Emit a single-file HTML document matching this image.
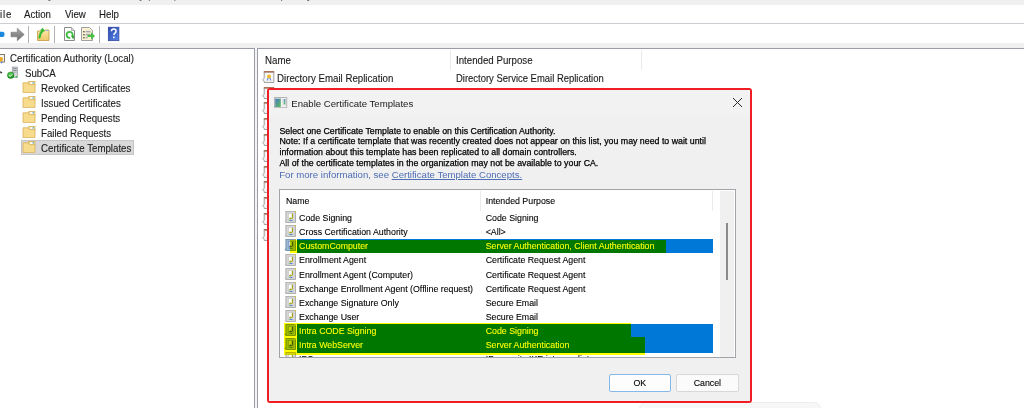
<!DOCTYPE html>
<html><head><meta charset="utf-8"><style>
html,body{margin:0;padding:0;width:1024px;height:408px;overflow:hidden;background:#fff;}
.t{position:absolute;white-space:nowrap;line-height:1;font-family:"Liberation Sans",sans-serif;}
.r{position:absolute;}
</style></head><body>
<div class="r" style="left:0px;top:0px;width:1024.00px;height:5.00px;background:#f0f0f0;"></div>
<div class="t" style="left:9.40px;top:-10.11px;font-size:10.87px;color:#6a6a6a;transform:scaleX(0.915);transform-origin:0 0;-webkit-text-stroke:0.12px #6a6a6a;white-space:pre;">certsrv - [Certification Authority (Local)\SubCA\Certificate Templates]</div>
<div class="r" style="left:0px;top:5px;width:1024.00px;height:18.00px;background:#fff;"></div>
<div class="t" style="left:0.30px;top:9.33px;font-size:10.60px;color:#1b1b1b;transform:scaleX(0.915);transform-origin:0 0;-webkit-text-stroke:0.12px #1b1b1b;letter-spacing:0.9px;">ile</div>
<div class="t" style="left:24.20px;top:9.33px;font-size:10.60px;color:#1b1b1b;transform:scaleX(0.915);transform-origin:0 0;-webkit-text-stroke:0.12px #1b1b1b;">Action</div>
<div class="t" style="left:65.40px;top:9.33px;font-size:10.60px;color:#1b1b1b;transform:scaleX(0.915);transform-origin:0 0;-webkit-text-stroke:0.12px #1b1b1b;">View</div>
<div class="t" style="left:98.70px;top:9.33px;font-size:10.60px;color:#1b1b1b;transform:scaleX(0.915);transform-origin:0 0;-webkit-text-stroke:0.12px #1b1b1b;">Help</div>
<div class="r" style="left:0px;top:23px;width:1024.00px;height:1.00px;background:#cdcdd4;"></div>
<div class="r" style="left:0px;top:24px;width:1024.00px;height:19.00px;background:#fff;"></div>
<div class="r" style="left:0px;top:43px;width:1024.00px;height:5.00px;background:#f0f0f0;"></div>
<div class="r" style="left:28px;top:26px;width:1.00px;height:17.00px;background:#b4b4b4;"></div>
<div class="r" style="left:54px;top:26px;width:1.00px;height:17.00px;background:#b4b4b4;"></div>
<div class="r" style="left:99px;top:26px;width:1.00px;height:17.00px;background:#b4b4b4;"></div>
<svg class="r" style="left:0;top:24px" width="130" height="19" viewBox="0 0 130 19">
<defs>
<linearGradient id="tga" x1="0" y1="0" x2="0" y2="1"><stop offset="0" stop-color="#a8a8a8"/><stop offset="1" stop-color="#6e6e6e"/></linearGradient>
<linearGradient id="tgf" x1="0" y1="0" x2="0" y2="1"><stop offset="0" stop-color="#fbe6a8"/><stop offset="1" stop-color="#efc86a"/></linearGradient>
<linearGradient id="tgh" x1="0" y1="0" x2="1" y2="1"><stop offset="0" stop-color="#2848b0"/><stop offset="1" stop-color="#5a86e8"/></linearGradient>
</defs>
<rect x="-3" y="7.8" width="7.5" height="5.2" rx="2" fill="#1a8ae0"/>
<path d="M11 8.2 h6.3 v-4 l6.9 6.3 -6.9 6.3 v-4 h-6.3z" fill="url(#tga)" stroke="#6a6a6a" stroke-width="0.5" stroke-linejoin="round"/>
<path d="M37.5 7 h6 l1 -1 h4.5 v10.5 h-11.5z" fill="url(#tgf)" stroke="#c9a24e" stroke-width="0.9"/>
<path d="M46 6.5 h2.5" stroke="#8ab8e8" stroke-width="1"/>
<path d="M39.5 13.5 q0.5 -4.5 3.2 -6.8" stroke="#34b834" stroke-width="2.2" fill="none" stroke-linecap="round"/>
<path d="M40 6.5 l2.8 -2.8 2.2 3.8z" fill="#34b834"/>
<path d="M64.5 3.5 h7 l3 3 v10 h-10z" fill="#fdfdfd" stroke="#8a8a8a"/>
<path d="M71.5 3.5 v3 h3" fill="#ddd" stroke="#999" stroke-width="0.7"/>
<circle cx="69.7" cy="10.9" r="3" fill="none" stroke="#3cba3c" stroke-width="1.7" stroke-dasharray="16 2.85" transform="rotate(80 69.7 10.9)"/>
<path d="M70.8 11.8 h3.6 l-1 3.6z" fill="#2ea82e"/>
<path d="M81.5 3.5 h8 l3 3 v10 h-11z" fill="#fbf3d2" stroke="#a0a0a0"/>
<rect x="83.2" y="7" width="1.4" height="1.4" fill="#505050"/><rect x="85.6" y="6.8" width="5" height="1.6" fill="#a8a8b0"/>
<rect x="83.2" y="10" width="1.4" height="1.4" fill="#505050"/><rect x="85.6" y="9.8" width="5" height="1.6" fill="#a8a8b0"/>
<rect x="83.2" y="13" width="1.4" height="1.4" fill="#505050"/><rect x="85.6" y="12.8" width="2" height="1.6" fill="#a8a8b0"/>
<path d="M87.5 11 h3.5 v-2.8 l4 3.8 -4 3.8 v-2.8 h-3.5z" fill="#48c048"/>
<rect x="108.3" y="3.2" width="10.6" height="13.5" fill="url(#tgh)" stroke="#2a3e98" stroke-width="0.7"/>
<path d="M111.3 7.3 q0.2 -2.4 2.4 -2.4 q2.4 0 2.4 2.2 q0 1.4 -1.4 2.2 q-0.9 0.5 -0.9 1.8" stroke="#fff" stroke-width="1.5" fill="none"/>
<rect x="113" y="12.5" width="1.6" height="1.7" fill="#fff"/>
</svg>
<div class="r" style="left:0px;top:48px;width:255.00px;height:360.00px;background:#fff;border-top:1px solid #9a9ca8;border-right:1px solid #9a9ca8;box-sizing:border-box;"></div>
<div class="r" style="left:255px;top:49px;width:2.00px;height:359.00px;background:#f4f4f4;"></div>
<svg class="r" style="left:0;top:50px" width="22" height="30" viewBox="0 0 22 30">
<defs><radialGradient id="gck" cx="0.4" cy="0.3" r="0.7"><stop offset="0" stop-color="#5fd05f"/><stop offset="1" stop-color="#138a13"/></radialGradient></defs>
<rect x="-2" y="4.5" width="6.5" height="7.5" fill="#f6f6fa" stroke="#7a6a50" stroke-width="0.9"/>
<circle cx="0.8" cy="9.3" r="2.2" fill="#eba820"/>
<circle cx="1.7" cy="12.6" r="0.8" fill="#3a7ae8"/>
<path d="M-0.5 21 l3 1.2 -1.6 1.6z" fill="#2a2a2a"/>
<rect x="12.2" y="17" width="5.3" height="10.6" fill="#d4d8dc" stroke="#8a9098" stroke-width="0.6"/>
<rect x="13" y="18" width="3.8" height="1.2" fill="#8a9098"/><rect x="13" y="20" width="3.8" height="1.2" fill="#8a9098"/><rect x="13" y="22" width="3.8" height="0.8" fill="#b0b4b8"/>
<rect x="15.6" y="26" width="1.6" height="1.4" fill="#3cc03c"/>
<circle cx="10.7" cy="25.2" r="3.3" fill="url(#gck)" stroke="#0e700e" stroke-width="0.4"/>
<path d="M9 25.2 l1.2 1.3 2.4 -2.6" stroke="#fff" stroke-width="1" fill="none"/>
</svg>
<div class="r" style="left:21px;top:140px;width:113.00px;height:15.00px;background:#d9d9d9;border:1px solid #c6c6c6;box-sizing:border-box;"></div>
<div class="t" style="left:9.60px;top:53.03px;font-size:10.60px;color:#1b1b1b;transform:scaleX(0.915);transform-origin:0 0;-webkit-text-stroke:0.12px #1b1b1b;">Certification Authority (Local)</div>
<div class="t" style="left:25.10px;top:68.03px;font-size:10.60px;color:#1b1b1b;transform:scaleX(0.915);transform-origin:0 0;-webkit-text-stroke:0.12px #1b1b1b;">SubCA</div>
<div class="t" style="left:41.00px;top:83.03px;font-size:10.60px;color:#1b1b1b;transform:scaleX(0.915);transform-origin:0 0;-webkit-text-stroke:0.12px #1b1b1b;">Revoked Certificates</div>
<div class="t" style="left:41.00px;top:98.03px;font-size:10.60px;color:#1b1b1b;transform:scaleX(0.915);transform-origin:0 0;-webkit-text-stroke:0.12px #1b1b1b;">Issued Certificates</div>
<div class="t" style="left:41.00px;top:113.03px;font-size:10.60px;color:#1b1b1b;transform:scaleX(0.915);transform-origin:0 0;-webkit-text-stroke:0.12px #1b1b1b;">Pending Requests</div>
<div class="t" style="left:41.00px;top:128.03px;font-size:10.60px;color:#1b1b1b;transform:scaleX(0.915);transform-origin:0 0;-webkit-text-stroke:0.12px #1b1b1b;">Failed Requests</div>
<div class="t" style="left:41.00px;top:143.03px;font-size:10.60px;color:#1b1b1b;transform:scaleX(0.915);transform-origin:0 0;-webkit-text-stroke:0.12px #1b1b1b;">Certificate Templates</div>
<svg class="r" style="left:22px;top:81px" width="14" height="12" viewBox="0 0 14 12"><rect x="6.8" y="0.5" width="6.2" height="4" fill="#f0cf78" stroke="#d8b058" stroke-width="0.8"/><rect x="7.8" y="1.1" width="4.4" height="2.6" fill="#fbfbf6"/><circle cx="11.2" cy="1.9" r="0.8" fill="#5aaec8"/><path d="M1 1.8 h5.3 l1.1 1.8 h5.6 v8 h-12z" fill="#f7dc8e" stroke="#d8b058" stroke-width="0.8"/></svg>
<svg class="r" style="left:22px;top:96px" width="14" height="12" viewBox="0 0 14 12"><rect x="6.8" y="0.5" width="6.2" height="4" fill="#f0cf78" stroke="#d8b058" stroke-width="0.8"/><rect x="7.8" y="1.1" width="4.4" height="2.6" fill="#fbfbf6"/><circle cx="11.2" cy="1.9" r="0.8" fill="#5aaec8"/><path d="M1 1.8 h5.3 l1.1 1.8 h5.6 v8 h-12z" fill="#f7dc8e" stroke="#d8b058" stroke-width="0.8"/></svg>
<svg class="r" style="left:22px;top:111px" width="14" height="12" viewBox="0 0 14 12"><rect x="6.8" y="0.5" width="6.2" height="4" fill="#f0cf78" stroke="#d8b058" stroke-width="0.8"/><rect x="7.8" y="1.1" width="4.4" height="2.6" fill="#fbfbf6"/><circle cx="11.2" cy="1.9" r="0.8" fill="#5aaec8"/><path d="M1 1.8 h5.3 l1.1 1.8 h5.6 v8 h-12z" fill="#f7dc8e" stroke="#d8b058" stroke-width="0.8"/></svg>
<svg class="r" style="left:22px;top:126px" width="14" height="12" viewBox="0 0 14 12"><rect x="6.8" y="0.5" width="6.2" height="4" fill="#f0cf78" stroke="#d8b058" stroke-width="0.8"/><rect x="7.8" y="1.1" width="4.4" height="2.6" fill="#fbfbf6"/><circle cx="11.2" cy="1.9" r="0.8" fill="#5aaec8"/><path d="M1 1.8 h5.3 l1.1 1.8 h5.6 v8 h-12z" fill="#f7dc8e" stroke="#d8b058" stroke-width="0.8"/></svg>
<svg class="r" style="left:22px;top:141px" width="14" height="12" viewBox="0 0 14 12"><rect x="6.8" y="0.5" width="6.2" height="4" fill="#f0cf78" stroke="#d8b058" stroke-width="0.8"/><rect x="7.8" y="1.1" width="4.4" height="2.6" fill="#fbfbf6"/><circle cx="11.2" cy="1.9" r="0.8" fill="#5aaec8"/><path d="M1 1.8 h5.3 l1.1 1.8 h5.6 v8 h-12z" fill="#f7dc8e" stroke="#d8b058" stroke-width="0.8"/></svg>
<div class="r" style="left:257px;top:48px;width:767.00px;height:360.00px;background:#fff;border-top:1px solid #9a9ca8;border-left:1px solid #9a9ca8;box-sizing:border-box;"></div>
<div class="r" style="left:450px;top:50px;width:1.00px;height:20.00px;background:#ebebeb;"></div>
<div class="r" style="left:641px;top:50px;width:1.00px;height:20.00px;background:#ebebeb;"></div>
<div class="t" style="left:264.60px;top:55.03px;font-size:10.60px;color:#1b1b1b;transform:scaleX(0.915);transform-origin:0 0;-webkit-text-stroke:0.12px #1b1b1b;">Name</div>
<div class="t" style="left:455.70px;top:55.03px;font-size:10.60px;color:#1b1b1b;transform:scaleX(0.915);transform-origin:0 0;-webkit-text-stroke:0.12px #1b1b1b;">Intended Purpose</div>
<div class="t" style="left:276.70px;top:73.23px;font-size:10.60px;color:#1b1b1b;transform:scaleX(0.915);transform-origin:0 0;-webkit-text-stroke:0.12px #1b1b1b;">Directory Email Replication</div>
<div class="t" style="left:455.60px;top:73.20px;font-size:10.63px;color:#1b1b1b;transform:scaleX(0.89);transform-origin:0 0;-webkit-text-stroke:0.12px #1b1b1b;">Directory Service Email Replication</div>
<div class="t" style="left:276.70px;top:89.03px;font-size:10.60px;color:#1b1b1b;transform:scaleX(0.915);transform-origin:0 0;-webkit-text-stroke:0.12px #1b1b1b;">Domain Controller</div>
<div class="t" style="left:455.60px;top:89.00px;font-size:10.63px;color:#1b1b1b;transform:scaleX(0.89);transform-origin:0 0;-webkit-text-stroke:0.12px #1b1b1b;">Client Authentication, Server Authentication</div>
<div class="t" style="left:276.70px;top:104.83px;font-size:10.60px;color:#1b1b1b;transform:scaleX(0.915);transform-origin:0 0;-webkit-text-stroke:0.12px #1b1b1b;">Domain Controller Authentication</div>
<div class="t" style="left:455.60px;top:104.80px;font-size:10.63px;color:#1b1b1b;transform:scaleX(0.89);transform-origin:0 0;-webkit-text-stroke:0.12px #1b1b1b;">Client Authentication, Server Authentication, Smart Card Logon</div>
<svg class="r" style="left:261px;top:70.8px" width="14" height="13" viewBox="0 0 14 13"><path d="M3.2 1 h9.6 v10.5 h-9.6 v-1 l-1.6 -1.6 1.6 -1.8z" fill="#f2f2f2" stroke="#8c8c8c" stroke-width="0.8"/><rect x="2.8" y="0" width="10.4" height="1.5" fill="#a8735a"/><rect x="4.8" y="2.5" width="6.5" height="6.5" fill="#fafafa"/><circle cx="8" cy="5.6" r="2" fill="#f0b828"/><path d="M7 7 l-0.6 2.4 M9 7 l0.6 2.4" stroke="#3a6ad8" stroke-width="0.9"/></svg>
<svg class="r" style="left:261px;top:86.6px" width="14" height="13" viewBox="0 0 14 13"><path d="M3.2 1 h9.6 v10.5 h-9.6 v-1 l-1.6 -1.6 1.6 -1.8z" fill="#f2f2f2" stroke="#8c8c8c" stroke-width="0.8"/><rect x="2.8" y="0" width="10.4" height="1.5" fill="#a8735a"/><rect x="4.8" y="2.5" width="6.5" height="6.5" fill="#fafafa"/><circle cx="8" cy="5.6" r="2" fill="#f0b828"/><path d="M7 7 l-0.6 2.4 M9 7 l0.6 2.4" stroke="#3a6ad8" stroke-width="0.9"/></svg>
<svg class="r" style="left:261px;top:102.4px" width="14" height="13" viewBox="0 0 14 13"><path d="M3.2 1 h9.6 v10.5 h-9.6 v-1 l-1.6 -1.6 1.6 -1.8z" fill="#f2f2f2" stroke="#8c8c8c" stroke-width="0.8"/><rect x="2.8" y="0" width="10.4" height="1.5" fill="#a8735a"/><rect x="4.8" y="2.5" width="6.5" height="6.5" fill="#fafafa"/><circle cx="8" cy="5.6" r="2" fill="#f0b828"/><path d="M7 7 l-0.6 2.4 M9 7 l0.6 2.4" stroke="#3a6ad8" stroke-width="0.9"/></svg>
<svg class="r" style="left:261px;top:118.2px" width="14" height="13" viewBox="0 0 14 13"><path d="M3.2 1 h9.6 v10.5 h-9.6 v-1 l-1.6 -1.6 1.6 -1.8z" fill="#f2f2f2" stroke="#8c8c8c" stroke-width="0.8"/><rect x="2.8" y="0" width="10.4" height="1.5" fill="#a8735a"/><rect x="4.8" y="2.5" width="6.5" height="6.5" fill="#fafafa"/><circle cx="8" cy="5.6" r="2" fill="#f0b828"/><path d="M7 7 l-0.6 2.4 M9 7 l0.6 2.4" stroke="#3a6ad8" stroke-width="0.9"/></svg>
<svg class="r" style="left:261px;top:134.0px" width="14" height="13" viewBox="0 0 14 13"><path d="M3.2 1 h9.6 v10.5 h-9.6 v-1 l-1.6 -1.6 1.6 -1.8z" fill="#f2f2f2" stroke="#8c8c8c" stroke-width="0.8"/><rect x="2.8" y="0" width="10.4" height="1.5" fill="#a8735a"/><rect x="4.8" y="2.5" width="6.5" height="6.5" fill="#fafafa"/><circle cx="8" cy="5.6" r="2" fill="#f0b828"/><path d="M7 7 l-0.6 2.4 M9 7 l0.6 2.4" stroke="#3a6ad8" stroke-width="0.9"/></svg>
<svg class="r" style="left:261px;top:149.8px" width="14" height="13" viewBox="0 0 14 13"><path d="M3.2 1 h9.6 v10.5 h-9.6 v-1 l-1.6 -1.6 1.6 -1.8z" fill="#f2f2f2" stroke="#8c8c8c" stroke-width="0.8"/><rect x="2.8" y="0" width="10.4" height="1.5" fill="#a8735a"/><rect x="4.8" y="2.5" width="6.5" height="6.5" fill="#fafafa"/><circle cx="8" cy="5.6" r="2" fill="#f0b828"/><path d="M7 7 l-0.6 2.4 M9 7 l0.6 2.4" stroke="#3a6ad8" stroke-width="0.9"/></svg>
<svg class="r" style="left:261px;top:165.6px" width="14" height="13" viewBox="0 0 14 13"><path d="M3.2 1 h9.6 v10.5 h-9.6 v-1 l-1.6 -1.6 1.6 -1.8z" fill="#f2f2f2" stroke="#8c8c8c" stroke-width="0.8"/><rect x="2.8" y="0" width="10.4" height="1.5" fill="#a8735a"/><rect x="4.8" y="2.5" width="6.5" height="6.5" fill="#fafafa"/><circle cx="8" cy="5.6" r="2" fill="#f0b828"/><path d="M7 7 l-0.6 2.4 M9 7 l0.6 2.4" stroke="#3a6ad8" stroke-width="0.9"/></svg>
<svg class="r" style="left:261px;top:181.4px" width="14" height="13" viewBox="0 0 14 13"><path d="M3.2 1 h9.6 v10.5 h-9.6 v-1 l-1.6 -1.6 1.6 -1.8z" fill="#f2f2f2" stroke="#8c8c8c" stroke-width="0.8"/><rect x="2.8" y="0" width="10.4" height="1.5" fill="#a8735a"/><rect x="4.8" y="2.5" width="6.5" height="6.5" fill="#fafafa"/><circle cx="8" cy="5.6" r="2" fill="#f0b828"/><path d="M7 7 l-0.6 2.4 M9 7 l0.6 2.4" stroke="#3a6ad8" stroke-width="0.9"/></svg>
<svg class="r" style="left:261px;top:197.2px" width="14" height="13" viewBox="0 0 14 13"><path d="M3.2 1 h9.6 v10.5 h-9.6 v-1 l-1.6 -1.6 1.6 -1.8z" fill="#f2f2f2" stroke="#8c8c8c" stroke-width="0.8"/><rect x="2.8" y="0" width="10.4" height="1.5" fill="#a8735a"/><rect x="4.8" y="2.5" width="6.5" height="6.5" fill="#fafafa"/><circle cx="8" cy="5.6" r="2" fill="#f0b828"/><path d="M7 7 l-0.6 2.4 M9 7 l0.6 2.4" stroke="#3a6ad8" stroke-width="0.9"/></svg>
<svg class="r" style="left:261px;top:213.0px" width="14" height="13" viewBox="0 0 14 13"><path d="M3.2 1 h9.6 v10.5 h-9.6 v-1 l-1.6 -1.6 1.6 -1.8z" fill="#f2f2f2" stroke="#8c8c8c" stroke-width="0.8"/><rect x="2.8" y="0" width="10.4" height="1.5" fill="#a8735a"/><rect x="4.8" y="2.5" width="6.5" height="6.5" fill="#fafafa"/><circle cx="8" cy="5.6" r="2" fill="#f0b828"/><path d="M7 7 l-0.6 2.4 M9 7 l0.6 2.4" stroke="#3a6ad8" stroke-width="0.9"/></svg>
<svg class="r" style="left:261px;top:228.8px" width="14" height="13" viewBox="0 0 14 13"><path d="M3.2 1 h9.6 v10.5 h-9.6 v-1 l-1.6 -1.6 1.6 -1.8z" fill="#f2f2f2" stroke="#8c8c8c" stroke-width="0.8"/><rect x="2.8" y="0" width="10.4" height="1.5" fill="#a8735a"/><rect x="4.8" y="2.5" width="6.5" height="6.5" fill="#fafafa"/><circle cx="8" cy="5.6" r="2" fill="#f0b828"/><path d="M7 7 l-0.6 2.4 M9 7 l0.6 2.4" stroke="#3a6ad8" stroke-width="0.9"/></svg>
<div class="r" style="left:639px;top:402px;width:182.00px;height:28.00px;background:#f7f7f7;border:1px solid #ededed;border-radius:7px;box-sizing:border-box;"></div>
<div class="r" style="left:266.7px;top:88.2px;width:485.80px;height:315.10px;background:#f0f0f0;border:2px solid #f01e24;border-radius:3px;box-sizing:border-box;"></div>
<div class="r" style="left:268.5px;top:90px;width:481.50px;height:25.50px;background:#f2f2f2;"></div>
<svg class="r" style="left:274px;top:97px" width="14" height="11" viewBox="0 0 14 11"><defs><linearGradient id="dg" x1="0" y1="0" x2="1" y2="1"><stop offset="0" stop-color="#4a78c4"/><stop offset="1" stop-color="#5cc05a"/></linearGradient><linearGradient id="dg2" x1="0" y1="0" x2="0" y2="1"><stop offset="0" stop-color="#6a9ad0"/><stop offset="1" stop-color="#6ac070"/></linearGradient></defs><rect x="0.5" y="0.5" width="12.2" height="10.2" fill="#f4f4f4" stroke="#b4b4b4"/><rect x="1.2" y="1.6" width="5.6" height="8.4" fill="url(#dg)"/><rect x="8.2" y="1.6" width="0.6" height="6" fill="#d8d8d8"/><rect x="9.6" y="2" width="1.9" height="5.6" fill="url(#dg2)"/><rect x="7.5" y="7.8" width="4.8" height="0.6" fill="#dcdcdc"/></svg>
<div class="t" style="left:291.30px;top:99.17px;font-size:9.6px;color:#1a1a1a;">Enable Certificate Templates</div>
<svg class="r" style="left:732px;top:97px" width="11" height="11" viewBox="0 0 11 11"><path d="M1 1 L10 10 M10 1 L1 10" stroke="#2a2a2a" stroke-width="1"/></svg>
<div class="t" style="left:279.50px;top:126.85px;font-size:8.8px;color:#000;-webkit-text-stroke:0.25px #000;">Select one Certificate Template to enable on this Certification Authority.</div>
<div class="t" style="left:279.50px;top:137.35px;font-size:8.8px;color:#000;-webkit-text-stroke:0.25px #000;">Note: If a certificate template that was recently created does not appear on this list, you may need to wait until</div>
<div class="t" style="left:279.50px;top:148.35px;font-size:8.8px;color:#000;-webkit-text-stroke:0.25px #000;">information about this template has been replicated to all domain controllers.</div>
<div class="t" style="left:279.50px;top:158.55px;font-size:8.8px;color:#000;-webkit-text-stroke:0.25px #000;">All of the certificate templates in the organization may not be available to your CA.</div>
<div class="t" style="left:279.20px;top:169.97px;font-size:9.6px;color:#4d6db4;">For more information, see <span style="text-decoration:underline;text-decoration-thickness:0.8px;text-underline-offset:1.2px">Certificate Template Concepts.</span></div>
<div class="r" style="left:279px;top:189px;width:457.00px;height:169.00px;background:#fff;border:1px solid #a2a4aa;box-sizing:border-box;"></div>
<div class="r" style="left:720px;top:191px;width:14.00px;height:166.00px;background:#f0f0f0;"></div>
<div class="r" style="left:726px;top:223px;width:2.00px;height:57.00px;background:#8a8a8a;"></div>
<div class="r" style="left:480px;top:191px;width:1.00px;height:20.00px;background:#ebebeb;"></div>
<div class="r" style="left:712px;top:191px;width:1.00px;height:20.00px;background:#ebebeb;"></div>
<div class="t" style="left:285.90px;top:197.05px;font-size:8.8px;color:#000;-webkit-text-stroke:0.1px #000;">Name</div>
<div class="t" style="left:485.70px;top:197.05px;font-size:8.8px;color:#000;-webkit-text-stroke:0.1px #000;">Intended Purpose</div>
<div class="r" style="left:297px;top:238.8px;width:416.00px;height:14.60px;background:#0078d7;"></div>
<div class="r" style="left:297px;top:324px;width:416.00px;height:28.70px;background:#0078d7;"></div>
<svg class="r" style="left:284px;top:211.2px" width="14" height="13" viewBox="0 0 14 13"><path d="M0.3 10.6 l1.8 -1.6 v2.4z" fill="#d8d8d8"/><rect x="1.9" y="0.3" width="9.6" height="11.2" fill="#d6d6d6" stroke="#a2a2a2" stroke-width="0.8"/><rect x="4.4" y="2.3" width="5.2" height="6.6" fill="#ffffff" stroke="#c0c0c0" stroke-width="0.6"/><path d="M8.4 2.8 v3.6 q0 1.1 -1.1 1.1 h-1.2" stroke="#a4a41c" stroke-width="1.2" fill="none"/><path d="M5.0 7.5 l1.5 -1.5 v3z" fill="#a4a41c"/><circle cx="6.1" cy="9.4" r="0.7" fill="#2a9a9a"/><circle cx="7.8" cy="9.4" r="0.7" fill="#4a62e0"/><circle cx="11.3" cy="0.8" r="0.8" fill="#d8c830"/></svg>
<div class="t" style="left:299.10px;top:214.05px;font-size:8.8px;color:#000;-webkit-text-stroke:0.1px #000;">Code Signing</div>
<div class="t" style="left:485.70px;top:214.05px;font-size:8.8px;color:#000;-webkit-text-stroke:0.1px #000;">Code Signing</div>
<svg class="r" style="left:284px;top:225.3px" width="14" height="13" viewBox="0 0 14 13"><path d="M0.3 10.6 l1.8 -1.6 v2.4z" fill="#d8d8d8"/><rect x="1.9" y="0.3" width="9.6" height="11.2" fill="#d6d6d6" stroke="#a2a2a2" stroke-width="0.8"/><rect x="4.4" y="2.3" width="5.2" height="6.6" fill="#ffffff" stroke="#c0c0c0" stroke-width="0.6"/><path d="M8.4 2.8 v3.6 q0 1.1 -1.1 1.1 h-1.2" stroke="#a4a41c" stroke-width="1.2" fill="none"/><path d="M5.0 7.5 l1.5 -1.5 v3z" fill="#a4a41c"/><circle cx="6.1" cy="9.4" r="0.7" fill="#2a9a9a"/><circle cx="7.8" cy="9.4" r="0.7" fill="#4a62e0"/><circle cx="11.3" cy="0.8" r="0.8" fill="#d8c830"/></svg>
<div class="t" style="left:299.10px;top:228.17px;font-size:8.8px;color:#000;-webkit-text-stroke:0.1px #000;">Cross Certification Authority</div>
<div class="t" style="left:485.70px;top:228.17px;font-size:8.8px;color:#000;-webkit-text-stroke:0.1px #000;">&lt;All&gt;</div>
<svg class="r" style="left:284px;top:239.4px" width="14" height="13" viewBox="0 0 14 13"><path d="M0.3 10.6 l1.8 -1.6 v2.4z" fill="#8ab0d8"/><rect x="1.9" y="0.3" width="9.6" height="11.2" fill="#9cb8d4" stroke="#6684a8" stroke-width="0.8"/><rect x="4.4" y="2.3" width="5.2" height="6.6" fill="#c4d8ec" stroke="#7890b0" stroke-width="0.6"/><path d="M8.4 2.8 v3.6 q0 1.1 -1.1 1.1 h-1.2" stroke="#3a5a7a" stroke-width="1.2" fill="none"/><path d="M5.0 7.5 l1.5 -1.5 v3z" fill="#3a5a7a"/><circle cx="6.1" cy="9.4" r="0.7" fill="#2a9a9a"/><circle cx="7.8" cy="9.4" r="0.7" fill="#4a62e0"/><circle cx="11.3" cy="0.8" r="0.8" fill="#d8c830"/></svg>
<div class="t" style="left:299.10px;top:242.29px;font-size:8.8px;color:#fff;-webkit-text-stroke:0.1px #fff;">CustomComputer</div>
<div class="t" style="left:485.70px;top:242.29px;font-size:8.8px;color:#fff;-webkit-text-stroke:0.1px #fff;">Server Authentication, Client Authentication</div>
<svg class="r" style="left:284px;top:253.6px" width="14" height="13" viewBox="0 0 14 13"><path d="M0.3 10.6 l1.8 -1.6 v2.4z" fill="#d8d8d8"/><rect x="1.9" y="0.3" width="9.6" height="11.2" fill="#d6d6d6" stroke="#a2a2a2" stroke-width="0.8"/><rect x="4.4" y="2.3" width="5.2" height="6.6" fill="#ffffff" stroke="#c0c0c0" stroke-width="0.6"/><path d="M8.4 2.8 v3.6 q0 1.1 -1.1 1.1 h-1.2" stroke="#a4a41c" stroke-width="1.2" fill="none"/><path d="M5.0 7.5 l1.5 -1.5 v3z" fill="#a4a41c"/><circle cx="6.1" cy="9.4" r="0.7" fill="#2a9a9a"/><circle cx="7.8" cy="9.4" r="0.7" fill="#4a62e0"/><circle cx="11.3" cy="0.8" r="0.8" fill="#d8c830"/></svg>
<div class="t" style="left:299.10px;top:256.41px;font-size:8.8px;color:#000;-webkit-text-stroke:0.1px #000;">Enrollment Agent</div>
<div class="t" style="left:485.70px;top:256.41px;font-size:8.8px;color:#000;-webkit-text-stroke:0.1px #000;">Certificate Request Agent</div>
<svg class="r" style="left:284px;top:267.7px" width="14" height="13" viewBox="0 0 14 13"><path d="M0.3 10.6 l1.8 -1.6 v2.4z" fill="#d8d8d8"/><rect x="1.9" y="0.3" width="9.6" height="11.2" fill="#d6d6d6" stroke="#a2a2a2" stroke-width="0.8"/><rect x="4.4" y="2.3" width="5.2" height="6.6" fill="#ffffff" stroke="#c0c0c0" stroke-width="0.6"/><path d="M8.4 2.8 v3.6 q0 1.1 -1.1 1.1 h-1.2" stroke="#a4a41c" stroke-width="1.2" fill="none"/><path d="M5.0 7.5 l1.5 -1.5 v3z" fill="#a4a41c"/><circle cx="6.1" cy="9.4" r="0.7" fill="#2a9a9a"/><circle cx="7.8" cy="9.4" r="0.7" fill="#4a62e0"/><circle cx="11.3" cy="0.8" r="0.8" fill="#d8c830"/></svg>
<div class="t" style="left:299.10px;top:270.53px;font-size:8.8px;color:#000;-webkit-text-stroke:0.1px #000;">Enrollment Agent (Computer)</div>
<div class="t" style="left:485.70px;top:270.53px;font-size:8.8px;color:#000;-webkit-text-stroke:0.1px #000;">Certificate Request Agent</div>
<svg class="r" style="left:284px;top:281.8px" width="14" height="13" viewBox="0 0 14 13"><path d="M0.3 10.6 l1.8 -1.6 v2.4z" fill="#d8d8d8"/><rect x="1.9" y="0.3" width="9.6" height="11.2" fill="#d6d6d6" stroke="#a2a2a2" stroke-width="0.8"/><rect x="4.4" y="2.3" width="5.2" height="6.6" fill="#ffffff" stroke="#c0c0c0" stroke-width="0.6"/><path d="M8.4 2.8 v3.6 q0 1.1 -1.1 1.1 h-1.2" stroke="#a4a41c" stroke-width="1.2" fill="none"/><path d="M5.0 7.5 l1.5 -1.5 v3z" fill="#a4a41c"/><circle cx="6.1" cy="9.4" r="0.7" fill="#2a9a9a"/><circle cx="7.8" cy="9.4" r="0.7" fill="#4a62e0"/><circle cx="11.3" cy="0.8" r="0.8" fill="#d8c830"/></svg>
<div class="t" style="left:299.10px;top:284.65px;font-size:8.8px;color:#000;-webkit-text-stroke:0.1px #000;">Exchange Enrollment Agent (Offline request)</div>
<div class="t" style="left:485.70px;top:284.65px;font-size:8.8px;color:#000;-webkit-text-stroke:0.1px #000;">Certificate Request Agent</div>
<svg class="r" style="left:284px;top:295.9px" width="14" height="13" viewBox="0 0 14 13"><path d="M0.3 10.6 l1.8 -1.6 v2.4z" fill="#d8d8d8"/><rect x="1.9" y="0.3" width="9.6" height="11.2" fill="#d6d6d6" stroke="#a2a2a2" stroke-width="0.8"/><rect x="4.4" y="2.3" width="5.2" height="6.6" fill="#ffffff" stroke="#c0c0c0" stroke-width="0.6"/><path d="M8.4 2.8 v3.6 q0 1.1 -1.1 1.1 h-1.2" stroke="#a4a41c" stroke-width="1.2" fill="none"/><path d="M5.0 7.5 l1.5 -1.5 v3z" fill="#a4a41c"/><circle cx="6.1" cy="9.4" r="0.7" fill="#2a9a9a"/><circle cx="7.8" cy="9.4" r="0.7" fill="#4a62e0"/><circle cx="11.3" cy="0.8" r="0.8" fill="#d8c830"/></svg>
<div class="t" style="left:299.10px;top:298.77px;font-size:8.8px;color:#000;-webkit-text-stroke:0.1px #000;">Exchange Signature Only</div>
<div class="t" style="left:485.70px;top:298.77px;font-size:8.8px;color:#000;-webkit-text-stroke:0.1px #000;">Secure Email</div>
<svg class="r" style="left:284px;top:310.0px" width="14" height="13" viewBox="0 0 14 13"><path d="M0.3 10.6 l1.8 -1.6 v2.4z" fill="#d8d8d8"/><rect x="1.9" y="0.3" width="9.6" height="11.2" fill="#d6d6d6" stroke="#a2a2a2" stroke-width="0.8"/><rect x="4.4" y="2.3" width="5.2" height="6.6" fill="#ffffff" stroke="#c0c0c0" stroke-width="0.6"/><path d="M8.4 2.8 v3.6 q0 1.1 -1.1 1.1 h-1.2" stroke="#a4a41c" stroke-width="1.2" fill="none"/><path d="M5.0 7.5 l1.5 -1.5 v3z" fill="#a4a41c"/><circle cx="6.1" cy="9.4" r="0.7" fill="#2a9a9a"/><circle cx="7.8" cy="9.4" r="0.7" fill="#4a62e0"/><circle cx="11.3" cy="0.8" r="0.8" fill="#d8c830"/></svg>
<div class="t" style="left:299.10px;top:312.89px;font-size:8.8px;color:#000;-webkit-text-stroke:0.1px #000;">Exchange User</div>
<div class="t" style="left:485.70px;top:312.89px;font-size:8.8px;color:#000;-webkit-text-stroke:0.1px #000;">Secure Email</div>
<svg class="r" style="left:284px;top:324.2px" width="14" height="13" viewBox="0 0 14 13"><path d="M0.3 10.6 l1.8 -1.6 v2.4z" fill="#8ab0d8"/><rect x="1.9" y="0.3" width="9.6" height="11.2" fill="#9cb8d4" stroke="#6684a8" stroke-width="0.8"/><rect x="4.4" y="2.3" width="5.2" height="6.6" fill="#c4d8ec" stroke="#7890b0" stroke-width="0.6"/><path d="M8.4 2.8 v3.6 q0 1.1 -1.1 1.1 h-1.2" stroke="#3a5a7a" stroke-width="1.2" fill="none"/><path d="M5.0 7.5 l1.5 -1.5 v3z" fill="#3a5a7a"/><circle cx="6.1" cy="9.4" r="0.7" fill="#2a9a9a"/><circle cx="7.8" cy="9.4" r="0.7" fill="#4a62e0"/><circle cx="11.3" cy="0.8" r="0.8" fill="#d8c830"/></svg>
<div class="t" style="left:299.10px;top:327.01px;font-size:8.8px;color:#fff;-webkit-text-stroke:0.1px #fff;">Intra CODE Signing</div>
<div class="t" style="left:485.70px;top:327.01px;font-size:8.8px;color:#fff;-webkit-text-stroke:0.1px #fff;">Code Signing</div>
<svg class="r" style="left:284px;top:338.3px" width="14" height="13" viewBox="0 0 14 13"><path d="M0.3 10.6 l1.8 -1.6 v2.4z" fill="#8ab0d8"/><rect x="1.9" y="0.3" width="9.6" height="11.2" fill="#9cb8d4" stroke="#6684a8" stroke-width="0.8"/><rect x="4.4" y="2.3" width="5.2" height="6.6" fill="#c4d8ec" stroke="#7890b0" stroke-width="0.6"/><path d="M8.4 2.8 v3.6 q0 1.1 -1.1 1.1 h-1.2" stroke="#3a5a7a" stroke-width="1.2" fill="none"/><path d="M5.0 7.5 l1.5 -1.5 v3z" fill="#3a5a7a"/><circle cx="6.1" cy="9.4" r="0.7" fill="#2a9a9a"/><circle cx="7.8" cy="9.4" r="0.7" fill="#4a62e0"/><circle cx="11.3" cy="0.8" r="0.8" fill="#d8c830"/></svg>
<div class="t" style="left:299.10px;top:341.13px;font-size:8.8px;color:#fff;-webkit-text-stroke:0.1px #fff;">Intra WebServer</div>
<div class="t" style="left:485.70px;top:341.13px;font-size:8.8px;color:#fff;-webkit-text-stroke:0.1px #fff;">Server Authentication</div>
<svg class="r" style="left:284px;top:352.4px" width="14" height="13" viewBox="0 0 14 13"><path d="M0.3 10.6 l1.8 -1.6 v2.4z" fill="#d8d8d8"/><rect x="1.9" y="0.3" width="9.6" height="11.2" fill="#d6d6d6" stroke="#a2a2a2" stroke-width="0.8"/><rect x="4.4" y="2.3" width="5.2" height="6.6" fill="#ffffff" stroke="#c0c0c0" stroke-width="0.6"/><path d="M8.4 2.8 v3.6 q0 1.1 -1.1 1.1 h-1.2" stroke="#a4a41c" stroke-width="1.2" fill="none"/><path d="M5.0 7.5 l1.5 -1.5 v3z" fill="#a4a41c"/><circle cx="6.1" cy="9.4" r="0.7" fill="#2a9a9a"/><circle cx="7.8" cy="9.4" r="0.7" fill="#4a62e0"/><circle cx="11.3" cy="0.8" r="0.8" fill="#d8c830"/></svg>
<div class="t" style="left:299.10px;top:355.25px;font-size:8.8px;color:#000;-webkit-text-stroke:0.1px #000;">IPSec</div>
<div class="t" style="left:485.70px;top:355.25px;font-size:8.8px;color:#000;-webkit-text-stroke:0.1px #000;">IP security IKE intermediate</div>
<div class="r" style="left:290px;top:240.3px;width:7.00px;height:12.70px;background:#ffff00;mix-blend-mode:multiply;"></div>
<div class="r" style="left:297px;top:240.3px;width:369.00px;height:12.70px;background:#ffff00;mix-blend-mode:multiply;"></div>
<div class="r" style="left:284px;top:323px;width:347.00px;height:14.40px;background:#ffff00;mix-blend-mode:multiply;"></div>
<div class="r" style="left:284px;top:337.4px;width:361.00px;height:17.30px;background:#ffff00;mix-blend-mode:multiply;"></div>
<div class="r" style="left:268.5px;top:358px;width:481.50px;height:43.30px;background:#f0f0f0;"></div>
<div class="r" style="left:279px;top:357px;width:457.00px;height:1.00px;background:#a2a4aa;"></div>
<div class="r" style="left:609px;top:373.7px;width:62.00px;height:18.50px;background:#fdfdfd;border:1px solid #86b8ea;border-radius:2px;box-sizing:border-box;"></div>
<div class="r" style="left:676.2px;top:373.7px;width:62.40px;height:18.50px;background:#fbfbfb;border:1px solid #d8d8d8;border-radius:2px;box-sizing:border-box;"></div>
<div class="t" style="left:633.50px;top:378.85px;font-size:8.8px;color:#000;-webkit-text-stroke:0.1px #000;">OK</div>
<div class="t" style="left:693.70px;top:378.85px;font-size:8.8px;color:#000;-webkit-text-stroke:0.1px #000;">Cancel</div>
</body></html>
